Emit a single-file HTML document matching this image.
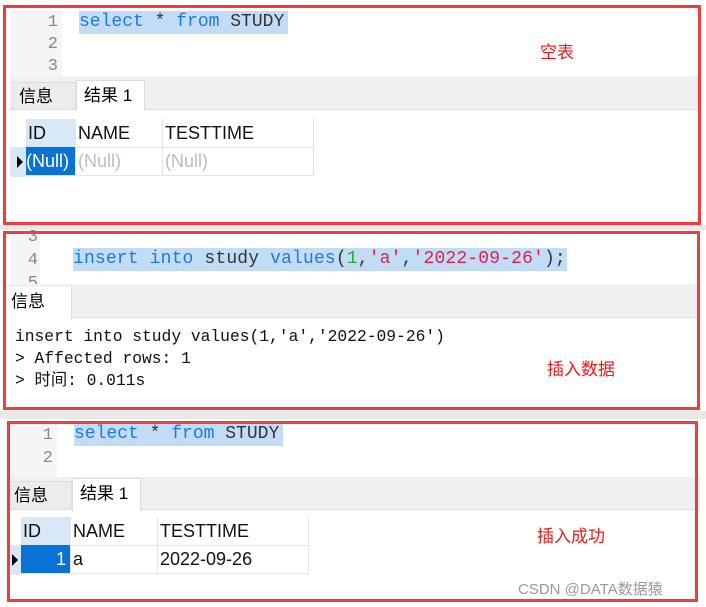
<!DOCTYPE html>
<html><head><meta charset="utf-8"><style>
*{margin:0;padding:0;box-sizing:border-box}
body{width:706px;height:607px;background:#fff;position:relative;overflow:hidden;font-family:"Liberation Sans","Noto Sans CJK SC",sans-serif}
.a{position:absolute}
.mono{font-family:"Liberation Mono","DejaVu Sans Mono","Noto Sans CJK SC",monospace}
.red{border:3px solid #f03c3c}
.ln{color:#888;font-size:17px;text-align:right;width:20px}
.kw{color:#1a7be0}.num{color:#1fa83a}.str{color:#e0204a}
.sel{background:#c3dcf6}
.cell{position:absolute;font-size:18px;line-height:28px;padding-left:2px;border-right:1px solid #e4e4e4;border-bottom:1px solid #e4e4e4;color:#111}
.note{color:#f01818;font-size:17px}
</style></head><body>
<div class="a" style="left:0;top:225px;width:706px;height:5px;background:#e9e9e9"></div>
<div class="a" style="left:0;top:411px;width:706px;height:8px;background:#e9e9e9"></div>

<div class="a" style="left:10px;top:10px;width:52px;height:66px;background:#f5f5f5"></div>
<div class="a ln mono" style="left:38px;top:12px;line-height:22px">1<br>2<br>3</div>
<div class="a mono sel" style="left:79px;top:11px;width:209px;height:23px;font-size:18px;line-height:23px;color:#333;white-space:pre"><span class="kw">select</span> * <span class="kw">from</span> STUDY</div>
<div class="a" style="left:10px;top:76px;width:690px;height:34px;background:#f0f0f0;border-bottom:1px solid #ddd"></div>
<div class="a" style="left:12px;top:82px;width:64px;height:28px;background:#ececec;border:1px solid #ddd;font-size:17px;line-height:28px;padding-left:6px">信息</div>
<div class="a" style="left:76px;top:80px;width:69px;height:31px;background:#fff;border:1px solid #ddd;border-bottom:none;font-size:17px;line-height:30px;padding-left:7px">结果 1</div>
<div class="cell" style="left:26px;top:119px;width:50px;background:#d8e8f7">ID</div>
<div class="cell" style="left:76px;top:119px;width:87px">NAME</div>
<div class="cell" style="left:163px;top:119px;width:151px">TESTTIME</div>
<div class="a" style="left:10px;top:147px;width:16px;height:30px;background:#d8e8f7"></div>
<div class="a" style="left:17px;top:156px;border-left:6px solid #000;border-top:6px solid transparent;border-bottom:6px solid transparent"></div>
<div class="cell" style="left:26px;top:147px;width:50px;background:#0a72d4;color:#fff;padding-left:0">(Null)</div>
<div class="cell" style="left:76px;top:147px;width:87px;color:#b8bcc8">(Null)</div>
<div class="cell" style="left:163px;top:147px;width:151px;color:#b8bcc8">(Null)</div>
<div class="a note" style="left:540px;top:38px">空表</div>
<div class="a red" style="left:3px;top:5px;width:698px;height:220px"></div>

<div class="a" style="left:10px;top:232px;width:30px;height:52px;background:#f5f5f5"></div>
<div class="a ln mono" style="left:18px;top:226px;line-height:23px;height:58px;overflow:hidden">3<br>4<br>5</div>
<div class="a mono sel" style="left:73px;top:248px;width:494px;height:23px;font-size:18px;line-height:23px;letter-spacing:0.15px;color:#333;white-space:pre"><span class="kw">insert</span> <span class="kw">into</span> study <span class="kw">values</span>(<span class="num">1</span>,<span class="str">'a'</span>,<span class="str">'2022-09-26'</span>);</div>
<div class="a" style="left:6px;top:284px;width:692px;height:34px;background:#f0f0f0;border-bottom:1px solid #ddd"></div>
<div class="a" style="left:6px;top:287px;width:66px;height:32px;background:#fff;border-right:1px solid #ddd;font-size:17px;line-height:30px;padding-left:5px">信息</div>
<div class="a mono" style="left:15px;top:326px;font-size:16.3px;line-height:22px;color:#111;white-space:pre">insert into study values(1,'a','2022-09-26')
&gt; Affected rows: 1
&gt; 时间: 0.011s</div>
<div class="a note" style="left:547px;top:355px">插入数据</div>
<div class="a red" style="left:3px;top:231px;width:697px;height:179px"></div>

<div class="a" style="left:10px;top:423px;width:47px;height:54px;background:#f5f5f5"></div>
<div class="a ln mono" style="left:33px;top:424px;line-height:23px">1<br>2</div>
<div class="a mono sel" style="left:74px;top:423px;width:209px;height:23px;font-size:18px;line-height:23px;color:#333;white-space:pre"><span class="kw">select</span> * <span class="kw">from</span> STUDY</div>
<div class="a" style="left:10px;top:477px;width:690px;height:33px;background:#f0f0f0;border-bottom:1px solid #ddd"></div>
<div class="a" style="left:10px;top:481px;width:62px;height:29px;background:#ececec;border:1px solid #ddd;font-size:17px;line-height:28px;padding-left:3px">信息</div>
<div class="a" style="left:72px;top:478px;width:69px;height:33px;background:#fff;border:1px solid #ddd;border-bottom:none;font-size:17px;line-height:30px;padding-left:7px">结果 1</div>
<div class="cell" style="left:21px;top:517px;width:50px;background:#d8e8f7">ID</div>
<div class="cell" style="left:71px;top:517px;width:87px">NAME</div>
<div class="cell" style="left:158px;top:517px;width:151px">TESTTIME</div>
<div class="a" style="left:10px;top:545px;width:11px;height:30px;background:#d8e8f7"></div>
<div class="a" style="left:12px;top:554px;border-left:6px solid #000;border-top:6px solid transparent;border-bottom:6px solid transparent"></div>
<div class="cell" style="left:21px;top:545px;width:50px;background:#0a72d4;color:#fff;text-align:right;padding-right:4px">1</div>
<div class="cell" style="left:71px;top:545px;width:87px">a</div>
<div class="cell" style="left:158px;top:545px;width:151px">2022-09-26</div>
<div class="a note" style="left:537px;top:522px">插入成功</div>
<div class="a red" style="left:7px;top:421px;width:691px;height:181px"></div>
<div class="a" style="left:518px;top:578px;font-size:15px;color:#999">CSDN @DATA数据猿</div>
</body></html>
